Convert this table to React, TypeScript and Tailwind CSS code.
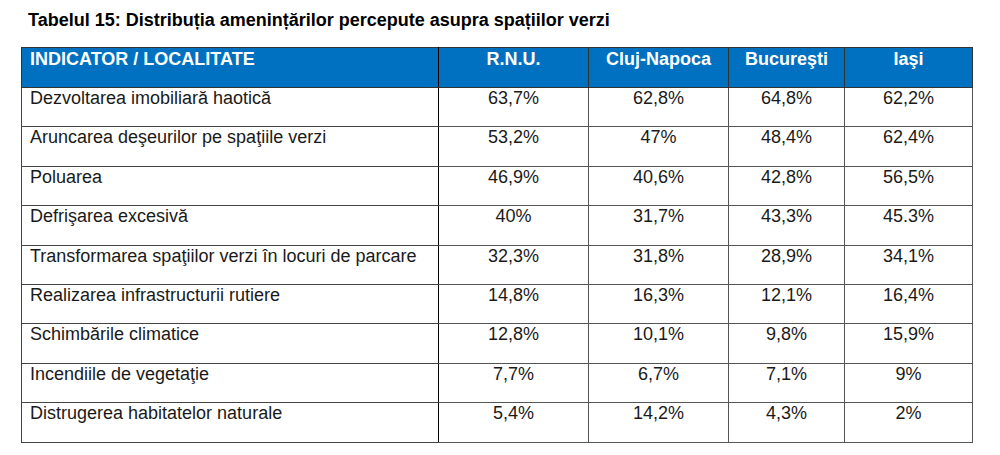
const rows: [string, string, string, string, string][] = [
  ['Dezvoltarea imobiliară haotică', '63,7%', '62,8%', '64,8%', '62,2%'],
  ['Aruncarea deşeurilor pe spaţiile verzi', '53,2%', '47%', '48,4%', '62,4%'],
  ['Poluarea', '46,9%', '40,6%', '42,8%', '56,5%'],
  ['Defrişarea excesivă', '40%', '31,7%', '43,3%', '45.3%'],
  ['Transformarea spaţiilor verzi în locuri de parcare', '32,3%', '31,8%', '28,9%', '34,1%'],
  ['Realizarea infrastructurii rutiere', '14,8%', '16,3%', '12,1%', '16,4%'],
  ['Schimbările climatice', '12,8%', '10,1%', '9,8%', '15,9%'],
  ['Incendiile de vegetaţie', '7,7%', '6,7%', '7,1%', '9%'],
  ['Distrugerea habitatelor naturale', '5,4%', '14,2%', '4,3%', '2%'],
]

const headers = ['R.N.U.', 'Cluj-Napoca', 'Bucureşti', 'Iaşi']

export default function App() {
  return (
    <div className="h-[455px] w-[1000px] bg-white font-['Liberation_Sans',Arial,sans-serif] text-[#1a1a1a]">
      <h1 className="pl-[28px] pt-[11px] text-[18px] font-bold leading-[18px] text-black">
        Tabelul 15: Distribuția amenințărilor percepute asupra spațiilor verzi
      </h1>
      <table className="ml-[21px] mt-[18px] w-[951px] table-fixed border-collapse border border-[#333] text-[18px]">
        <colgroup>
          <col className="w-[417px]" />
          <col className="w-[150px]" />
          <col className="w-[140px]" />
          <col className="w-[116px]" />
          <col className="w-[128px]" />
        </colgroup>
        <thead>
          <tr className="h-[40px] bg-[#0070c0] text-white">
            <th className="border border-[#333] border-r-black px-[8px] pt-[2px] text-left align-top font-bold leading-[18px]">
              INDICATOR / LOCALITATE
            </th>
            {headers.map((h) => (
              <th key={h} className="border border-[#333] pt-[2px] text-center align-top font-bold leading-[18px]">
                {h}
              </th>
            ))}
          </tr>
        </thead>
        <tbody>
          {rows.map((r) => (
            <tr key={r[0]} className="h-[39.4px]">
              <td className="border border-[#444] border-r-black px-[8px] pt-[1px] align-top leading-[18px] whitespace-nowrap">{r[0]}</td>
              {r.slice(1).map((v, i) => (
                <td key={i} className="border border-[#555] pt-[1px] text-center align-top leading-[18px]">
                  {v}
                </td>
              ))}
            </tr>
          ))}
        </tbody>
      </table>
    </div>
  )
}
